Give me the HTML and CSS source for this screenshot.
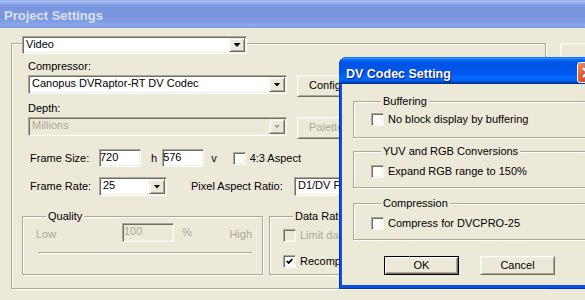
FILE: index.html
```html
<!DOCTYPE html>
<html lang="en">
<head>
  <meta charset="UTF-8" />
  <meta name="viewport" content="width=device-width, initial-scale=1.0"/>
  <title>Project Settings</title>
  <link rel="stylesheet" href="styles.css">
</head>
<body>
  <!-- Parent window: Project Settings -->
  <div class="titlebar">Project Settings</div>

  <div class="client">
    <div class="outer-group">
      <div class="combo combo-head"><span class="value">Video</span><span class="drop"></span></div>

      <div class="label lbl-compressor">Compressor:</div>
      <div class="row row-compressor">
        <div class="combo combo-wide"><span class="value">Canopus DVRaptor-RT DV Codec</span><span class="drop"></span></div>
        <div class="btn btn-side">Configure...</div>
      </div>

      <div class="label lbl-depth">Depth:</div>
      <div class="row row-depth">
        <div class="combo combo-wide disabled"><span class="value">Millions</span><span class="drop"></span></div>
        <div class="btn btn-side disabled">Palette...</div>
      </div>

      <div class="row row-frame">
        <span class="field-label">Frame Size:</span>
        <div class="edit">720</div>
        <span class="unit unit-h">h</span>
        <div class="edit">576</div>
        <span class="unit unit-v">v</span>
        <div class="check"><span class="box"></span>4:3 Aspect</div>
      </div>

      <div class="row row-rate">
        <span class="field-label">Frame Rate:</span>
        <div class="combo combo-rate"><span class="value">25</span><span class="drop"></span></div>
        <span class="par-label">Pixel Aspect Ratio:</span>
        <div class="combo combo-par"><span class="value">D1/DV PAL (1.067)</span><span class="drop"></span></div>
      </div>

      <div class="row row-groups">
        <div class="group quality">
          <div class="group-title">Quality</div>
          <div class="quality-row">
            <span class="q-low">Low</span>
            <div class="edit edit-quality">100</div>
            <span class="q-pct">%</span>
            <span class="q-high">High</span>
          </div>
          <div class="slider-track"></div>
        </div>
        <div class="group datarate">
          <div class="group-title">Data Rate</div>
          <div class="check check-limit disabled"><span class="box"></span>Limit data rate to:</div>
          <div class="check check-recomp"><span class="box checked">
            <svg width="7" height="7" viewBox="0 0 7 7"><polyline points="0.8,3 2.6,4.9 6.3,1.2" fill="none" stroke="#000" stroke-width="1.8"/></svg>
          </span>Recompress</div>
        </div>
      </div>
    </div>

    <!-- right-hand button column of the parent, only its edge shows -->
    <div class="btn btn-main"></div>
  </div>

  <!-- Child dialog: DV Codec Setting -->
  <div class="dialog">
    <div class="dlg-title">
      <span class="dlg-caption">DV Codec Setting</span>
      <span class="close-btn">
        <svg width="19" height="19" viewBox="0 0 19 19"><path d="M5 5 L14 14 M14 5 L5 14" stroke="#fff" stroke-width="2.2"/></svg>
      </span>
    </div>
    <div class="dlg-body">
      <div class="group dlg-group g-buffer">
        <div class="group-title">Buffering</div>
        <div class="check dlg-check"><span class="box"></span>No block display by buffering</div>
      </div>
      <div class="group dlg-group g-yuv">
        <div class="group-title">YUV and RGB Conversions</div>
        <div class="check dlg-check"><span class="box"></span>Expand RGB range to 150%</div>
      </div>
      <div class="group dlg-group g-comp">
        <div class="group-title">Compression</div>
        <div class="check dlg-check"><span class="box"></span>Compress for DVCPRO-25</div>
      </div>
      <div class="dlg-buttons">
        <div class="btn btn-dlg btn-default">OK</div>
        <div class="btn btn-dlg">Cancel</div>
      </div>
    </div>
  </div>
</body>
</html>
```

FILE: styles.css
```css
* {
  box-sizing: border-box;
}

html, body {
  margin: 0;
  overflow: hidden;
}

body {
  position: relative;
  width: 585px;
  height: 300px;
  background: #ece9d8;
  font: 11px/13px "Liberation Sans", Arial, sans-serif;
  color: #000;
}

/* Parent window title bar (inactive) */
.titlebar {
  height: 28px;
  padding: 9px 0 0 4px;
  font: bold 13px/14px "Liberation Sans", Arial, sans-serif;
  color: #d8e2f7;
  background: linear-gradient(to bottom, #8aa5e6 0%, #b0c5f4 4%, #9cb5ef 9%, #839fe5 16%, #7a96df 26%, #7a96df 62%, #809ce3 78%, #8eaaec 90%, #7e99df 100%);
}

.client {
  display: flex;
  align-items: flex-start;
  padding: 15px 0 0 11px;
}

/* Etched group boxes */
.outer-group,
.group {
  border: 1px solid #aca899;
  box-shadow: inset 1px 1px 0 #fff, 1px 1px 0 #fff;
}

.outer-group {
  width: 535px;
  height: 246px;
  flex-shrink: 0;
}

.group {
  display: flex;
  flex-direction: column;
  align-items: flex-start;
}

.group-title {
  margin: -7px 0 0 10px;
  padding: 0 2px;
  background: #ece9d8;
  white-space: nowrap;
}

.row {
  display: flex;
  align-items: flex-start;
}

.label {
  margin-left: 16px;
}

.lbl-compressor { margin-top: 6px; }
.lbl-depth { margin-top: 5px; }

.row-compressor,
.row-depth {
  margin: 2px 0 0 16px;
}

.row-frame {
  margin: 10px 0 0 18px;
  align-items: center;
}

.row-rate {
  margin: 10px 0 0 18px;
  align-items: center;
}

.row-groups {
  margin: 20px 0 0 10px;
  gap: 6px;
}

/* Classic sunken field */
.combo,
.edit {
  border: 1px solid;
  border-color: #aca899 #fff #fff #aca899;
  box-shadow: inset 1px 1px 0 #716f64, inset -1px -1px 0 #f1efe2;
  background: #fff;
}

.combo {
  display: flex;
  height: 19px;
  padding: 1px;
}

.combo .value {
  flex: 1;
  padding: 0 2px;
  line-height: 13px;
  white-space: nowrap;
  overflow: hidden;
}

.combo .drop {
  width: 16px;
  flex-shrink: 0;
  display: flex;
  align-items: center;
  justify-content: center;
  background: #ece9d8;
  border: 1px solid;
  border-color: #f1efe2 #716f64 #716f64 #f1efe2;
  box-shadow: inset 1px 1px 0 #fff, inset -1px -1px 0 #aca899;
}

.combo .drop::after {
  content: "";
  width: 7px;
  height: 4px;
  background: #000;
  clip-path: polygon(0 0, 100% 0, 50% 100%);
}

.combo.disabled {
  background: #ece9d8;
  color: #aca899;
}

.combo.disabled .drop::after {
  background: #aca899;
}

.combo-head {
  width: 225px;
  height: 18px;
  margin: -8px 0 0 10px;
}

.combo-wide { width: 259px; }
.combo-rate { width: 68px; }
.combo-par { width: 150px; }

.edit {
  width: 42px;
  height: 18px;
  padding: 0;
  line-height: 14px;
}

.field-label {
  width: 69px;
}

.unit-h { margin: 0 5px 0 10px; }
.unit-v { margin: 0 16px 0 7px; }

.par-label {
  width: 103px;
  margin-left: 24px;
}

/* Classic raised buttons */
.btn {
  background: #ece9d8;
  border: 1px solid;
  border-color: #fff #716f64 #716f64 #fff;
  box-shadow: inset 1px 1px 0 #f1efe2, inset -1px -1px 0 #aca899;
  text-align: center;
  white-space: nowrap;
}

.btn.disabled {
  color: #aca899;
}

.btn-side {
  width: 75px;
  height: 22px;
  margin-left: 10px;
  padding-left: 11px;
  text-align: left;
  line-height: 18px;
}

.btn-main {
  width: 75px;
  height: 23px;
  margin-left: 14px;
  flex-shrink: 0;
}

/* Checkboxes */
.check {
  display: flex;
  align-items: center;
  gap: 4px;
  white-space: nowrap;
}

.box {
  width: 13px;
  height: 13px;
  flex-shrink: 0;
  display: flex;
  align-items: center;
  justify-content: center;
  background: #fff;
  border: 1px solid;
  border-color: #aca899 #fff #fff #aca899;
  box-shadow: inset 1px 1px 0 #716f64, inset -1px -1px 0 #f1efe2;
}

.check.disabled {
  color: #aca899;
}

.check.disabled .box {
  background: #ece9d8;
}

/* Quality group */
.quality {
  width: 241px;
  height: 59px;
  padding: 0 10px 0 13px;
}

.quality-row {
  display: flex;
  align-items: flex-start;
  align-self: stretch;
  color: #aca899;
}

.q-low {
  width: 86px;
  margin-top: 5px;
}

.edit-quality {
  width: 52px;
  height: 19px;
  padding-left: 1px;
  background: #ece9d8;
}

.q-pct {
  margin: 3px 0 0 8px;
}

.q-high {
  margin: 5px 0 0 auto;
}

.slider-track {
  align-self: stretch;
  margin: 10px 0 0 2px;
  height: 2px;
  border-top: 1px solid #aca899;
  border-bottom: 1px solid #fff;
}

/* Data rate group */
.datarate {
  width: 260px;
  height: 59px;
  padding-left: 13px;
}

.check-limit { margin-top: 6px; }
.check-recomp { margin-top: 13px; }

/* Child dialog, floating over the parent window */
.dialog {
  position: absolute;
  left: 339px;
  top: 57px;
  width: 261px;
  height: 232px;
  padding: 0 3px 4px;
  display: flex;
  flex-direction: column;
  border-radius: 8px 8px 0 0;
  overflow: hidden;
  background: #0b50e3;
  box-shadow: inset 1px 0 0 #0030b8, inset 0 -1px 0 #0030b8;
}

.dlg-title {
  height: 27px;
  margin: 0 -3px;
  padding: 0 2px 0 7px;
  display: flex;
  align-items: flex-start;
  background: linear-gradient(to bottom, #0058ee 0%, #3593ff 4%, #288eff 6%, #127dff 8%, #036ffc 10%, #0262ee 14%, #0057e5 20%, #0054e3 24%, #0055eb 56%, #005bf5 66%, #026afe 76%, #0062ef 86%, #0052d6 92%, #0040ab 94%, #003092 100%);
}

.dlg-caption {
  padding-top: 10px;
  font: bold 12.5px/15px "Liberation Sans", Arial, sans-serif;
  color: #fff;
  text-shadow: 1px 1px 0 #0a1883;
}

.close-btn {
  width: 21px;
  height: 21px;
  margin: 5px 0 0 auto;
  border: 1px solid #fff;
  border-radius: 3px;
  background: linear-gradient(135deg, #ea8e6e 0%, #dd5a35 45%, #c4401c 100%);
}

.close-btn svg {
  display: block;
}

.dlg-body {
  flex: 1;
  background: #ece9d8;
  padding: 17px 11px 0;
  display: flex;
  flex-direction: column;
}

.dlg-group {
  height: 37px;
  padding-left: 17px;
}

.g-yuv { margin-top: 13px; }
.g-comp { margin-top: 15px; }

.g-buffer .dlg-check { margin-top: 5px; }
.g-yuv .dlg-check,
.g-comp .dlg-check { margin-top: 7px; }

.dlg-buttons {
  display: flex;
  justify-content: center;
  gap: 21px;
  margin-top: 16px;
}

.btn-dlg {
  width: 75px;
  height: 19px;
  line-height: 17px;
}

.btn-default {
  border: 1px solid #000;
  box-shadow: inset 1px 1px 0 #fff, inset -1px -1px 0 #716f64, inset -2px -2px 0 #aca899;
}
```
